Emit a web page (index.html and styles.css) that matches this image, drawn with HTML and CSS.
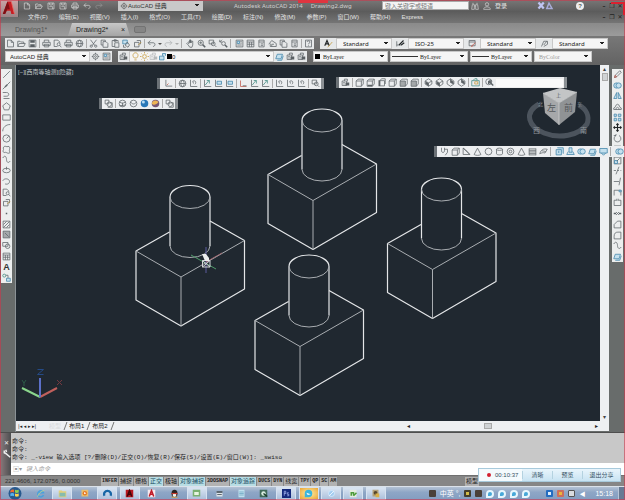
FILE: index.html
```html
<!DOCTYPE html>
<html lang="zh-CN">
<head>
<meta charset="utf-8">
<title>Autodesk AutoCAD 2014 - Drawing2.dwg</title>
<link rel="stylesheet" href="styles.css">
</head>
<body>
<svg class="defs" aria-hidden="true">
  <symbol id="new" viewBox="0 0 12 12"><path d="M2 1.5h5l3 3v6H2zM7 1.5v3h3"/></symbol>
  <symbol id="open" viewBox="0 0 12 12"><path d="M1 10V3h3l1 1h4v2M1 10l2-4h8l-2 4z"/></symbol>
  <symbol id="save" viewBox="0 0 12 12"><path d="M1.5 1.5h9v9h-9z"/><path class="dk" d="M3 1.500h6v3.500H3zM3 7h6v3.500H3z"/></symbol>
  <symbol id="savel" viewBox="0 0 12 12"><path d="M1.500 1.500h9v9h-9zM4 1.500v3h4v-3M3.500 7h5v3.500"/></symbol>
  <symbol id="print" viewBox="0 0 12 12"><path d="M3 4V1.500h6V4M1 4.500h10v4H1zM3 7h6v3.500H3z"/></symbol>
  <symbol id="preview" viewBox="0 0 12 12"><path d="M6 10H1.500V1.500h5L9 4v1"/><circle cx="7.500" cy="7" r="2"/><path d="M9 8.500l2 2.500"/></symbol>
  <symbol id="globe" viewBox="0 0 12 12"><circle cx="6" cy="6" r="4.500"/><path d="M1.500 6h9M6 1.500c-3 3-3 6 0 9M6 1.500c3 3 3 6 0 9"/></symbol>
  <symbol id="cut" viewBox="0 0 12 12"><path d="M2 1l6 8M10 1L4 9"/><circle cx="3" cy="9.500" r="1.500"/><circle cx="9" cy="9.500" r="1.500"/></symbol>
  <symbol id="copy" viewBox="0 0 12 12"><path d="M4 3.500h4l2.500 2.500v5H4zM4 8H1.500V1.500H7v2"/></symbol>
  <symbol id="paste" viewBox="0 0 12 12"><path d="M5 10H1.500V2h8v2M4 1h3v2H4zM5 5h5.500v6H5z"/></symbol>
  <symbol id="match" viewBox="0 0 12 12"><path class="bl" d="M1 1.500h6v5H1z"/><path d="M7 4l3 4-2 3-4-3zM2 8v3h3"/></symbol>
  <symbol id="block" viewBox="0 0 12 12"><path d="M2 4.500h6v6H2zM5 2h5v5"/><path class="gd" d="M7 8l4-4"/></symbol>
  <symbol id="undo" viewBox="0 0 12 12"><path d="M4.500 2L1.500 5l3 3M1.500 5H8c4 0 3 5 0 5"/></symbol>
  <symbol id="redo" viewBox="0 0 12 12"><path d="M7.500 2l3 3-3 3M10.500 5H4C0 5 1 10 4 10"/></symbol>
  <symbol id="pan" viewBox="0 0 12 12"><path d="M3 8L1 6l1-1 2 1V3l1-1v3-4h1v4-3h1v3l1-2h1v5L8 11H5z"/></symbol>
  <symbol id="zoom" viewBox="0 0 12 12"><circle cx="5" cy="5" r="3.500"/><path class="th" d="M7.500 7.500L11 11"/><path d="M3 5h4M5 3v4"/></symbol>
  <symbol id="zoomw" viewBox="0 0 12 12"><path d="M1.500 1.500h6v5h-6z"/><circle cx="7" cy="6.500" r="2.500"/><path d="M9 8.500l2 2"/></symbol>
  <symbol id="zoomp" viewBox="0 0 12 12"><path d="M1 4l3-3M1 4h3M1 4V1"/><circle cx="6" cy="6" r="2.500"/><path class="th" d="M8 8l3 3"/></symbol>
  <symbol id="panel" viewBox="0 0 12 12"><path d="M1.500 1.500h9v9h-9z"/><path class="bl" d="M3 3h3v3H3z"/><path d="M7 3.500h2M7 5.500h2M3 8h6"/></symbol>
  <symbol id="grid" viewBox="0 0 12 12"><path d="M1.500 1.500h9v9h-9zM1.500 4h9M1.500 7h9M4.500 4v6.500M7.500 4v6.500"/></symbol>
  <symbol id="tool" viewBox="0 0 12 12"><path d="M2.500 1.500h7v9h-7zM2.500 4h7M5 6.500h3M5 8.500h3"/></symbol>
  <symbol id="house" viewBox="0 0 12 12"><path d="M1 7l4-5 6 4v4H3V6M5 10V7h3"/></symbol>
  <symbol id="help" viewBox="0 0 12 12"><path d="M2 1.500h8v9H2zM4 4c0-2 4-2 4 0S6 5 6 7M6 8.500v1"/></symbol>
  <symbol id="gear" viewBox="0 0 12 12"><circle cx="6" cy="6" r="3.500"/><circle cx="6" cy="6" r="1.200"/><path d="M6 1v2M6 9v2M1 6h2M9 6h2"/></symbol>
  <symbol id="textst" viewBox="0 0 12 12"><path class="dk2" d="M1 9l3-7 3 7M2 6.500h4"/><path class="gd" d="M5 11l6-7"/></symbol>
  <symbol id="dimst" viewBox="0 0 12 12"><path d="M1 3v7M1 8h7"/><path class="dk2" d="M4 8l6-6M7 8l4-3"/></symbol>
  <symbol id="tabst" viewBox="0 0 12 12"><path d="M1.500 2h8v7h-8zM1.500 4h8"/><path class="rd" d="M5 9l5-4M4 10l3-1"/></symbol>
  <symbol id="leadst" viewBox="0 0 12 12"><path d="M2 10l3-7h5v4l-5 3M5 8l4-5"/></symbol>
  <symbol id="layerb" viewBox="0 0 12 12"><path class="bl" d="M1 9l2-6h7L8 9zM3 11h6l2-6"/></symbol>
  <symbol id="layprop" viewBox="0 0 12 12"><path d="M4.500 4V1.500h4v3M1.500 4h6v6h-6zM3 6h2M3 8h2"/><path class="dk" d="M6 6h5v4H6z"/></symbol>
  <symbol id="bulb" viewBox="0 0 12 12"><path class="gd" d="M4.500 8C1 5 3 1 6 1s5 4 1.500 7zM4.500 10.500h3"/></symbol>
  <symbol id="sun" viewBox="0 0 12 12"><circle class="gd" cx="6" cy="6" r="2.500"/><path class="gd" d="M6 0v2M6 10v2M0 6h2M10 6h2M2 2l1 1M9 9l1 1M10 2L9 3M3 9l-1 1"/></symbol>
  <symbol id="lock" viewBox="0 0 12 12"><path class="bl" d="M2 5.500h6v5H2zM6 5V2h4v3"/></symbol>
  <symbol id="ucs" viewBox="0 0 12 12"><path d="M2.500 1v8.500H11"/><path class="rd" d="M4 8l2-2"/></symbol>
  <symbol id="ucs2" viewBox="0 0 12 12"><path d="M2 1v9h9"/><path class="gr" d="M3 8l5-6M5 2h3.500v4"/></symbol>
  <symbol id="ucs3" viewBox="0 0 12 12"><path d="M2 1v9h9"/><path class="bl" d="M4 3h6v4H4z"/></symbol>
  <symbol id="ucsr" viewBox="0 0 12 12"><path class="rd" d="M2 2v8h8"/><path d="M5 9h5"/></symbol>
  <symbol id="ucsx" viewBox="0 0 12 12"><path d="M2 1v9h9M5 3c4-2 5 2 3 4M5 3l1 3"/></symbol>
  <symbol id="cubea" viewBox="0 0 12 12"><path d="M1.500 4h7v7h-7zM1.500 4L4 1.500h7L8.500 4M11 1.500V8L8.500 11"/></symbol>
  <symbol id="cubeb" viewBox="0 0 12 12"><path d="M1.500 4h7v7h-7zM1.500 4L4 1.500h7V8L8.500 11M8.500 4L11 1.500"/><path class="dk" d="M2 9h6v2H2z"/></symbol>
  <symbol id="cubec" viewBox="0 0 12 12"><path class="dk" d="M2 3h2v8H2z"/><path d="M4 3.500h6v7H4zM4 3.500L6 1h5v7"/></symbol>
  <symbol id="cubed" viewBox="0 0 12 12"><path class="dk3" d="M1.500 4h7v7h-7z"/><path d="M1.500 4L4 1.500h7V8L8.500 11"/></symbol>
  <symbol id="iso" viewBox="0 0 12 12"><path d="M6 1l4.500 3v4L6 11 1.500 8V4zM1.500 4L6 6.500 10.500 4M6 6.500V11"/><path class="dk" d="M2 4.500l4 2v4L2 8z"/></symbol>
  <symbol id="isor" viewBox="0 0 12 12"><path d="M6 1l4.500 3v4L6 11 1.500 8V4zM6 1v5l4.500 2"/><path class="dk" d="M6 2l4 3v3L6 6z"/></symbol>
  <symbol id="camera" viewBox="0 0 12 12"><path class="gr" d="M1 3.500h10v7H1zM3 3l2-2h3v2"/><path class="gd" d="M5 5h4v3H5z"/></symbol>
  <symbol id="orbit" viewBox="0 0 12 12"><circle cx="5" cy="5" r="4"/><path class="th" d="M5 4l6 6M5 4v4M5 4h4"/></symbol>
  <symbol id="cubes" viewBox="0 0 12 12"><path d="M1.500 1.500h5v5h-5z"/><circle cx="7" cy="7" r="3"/><path d="M8 5h3v6H5"/></symbol>
  <symbol id="wire" viewBox="0 0 12 12"><circle cx="6" cy="6" r="4.500"/><path d="M2 4c3 2 5 2 8 0M6 5v5M2 9l8-1"/></symbol>
  <symbol id="hid" viewBox="0 0 12 12"><circle cx="6" cy="6" r="4.500"/><path d="M2 4c3 4 6 3 8 0"/></symbol>
  <symbol id="ballb" viewBox="0 0 12 12"><circle cx="6" cy="6" r="5" fill="#2878b8" stroke="none"/><circle cx="4.500" cy="4" r="2" fill="#b8dcf4" stroke="none"/></symbol>
  <symbol id="ballo" viewBox="0 0 12 12"><circle cx="6" cy="6" r="5" fill="#765775" stroke="none"/><path d="M1 6c2 3 6 2 9-2a5 5 0 0 0-9 2" fill="#eeb554" stroke="none"/></symbol>
  <symbol id="line" viewBox="0 0 12 12"><path d="M1.500 10.500l9-9"/></symbol>
  <symbol id="xline" viewBox="0 0 12 12"><path d="M1 11L11 1"/><path class="th" d="M4 8l3-3"/></symbol>
  <symbol id="pline" viewBox="0 0 12 12"><path d="M1 2h5c4 0 4 5 0 5H2M2 10h8"/></symbol>
  <symbol id="poly" viewBox="0 0 12 12"><path d="M6 1l5 4-2 5.500H3L1 5z"/></symbol>
  <symbol id="rect" viewBox="0 0 12 12"><path d="M1 2.500h10v7H1z"/></symbol>
  <symbol id="arc" viewBox="0 0 12 12"><path d="M1 11c0-5 4-9 10-9"/></symbol>
  <symbol id="circle" viewBox="0 0 12 12"><circle cx="6" cy="6" r="4.800"/><path d="M6 6l3-3"/></symbol>
  <symbol id="cloud" viewBox="0 0 12 12"><path d="M3 10C0 9 2 7 2 6S1 3 3 2s3 1 5 0 3 2 2 4 2 5-1 5-3-2-6-1z"/></symbol>
  <symbol id="spline" viewBox="0 0 12 12"><path d="M1 4c3-5 5-1 5 2s2 6 5 2"/></symbol>
  <symbol id="ell" viewBox="0 0 12 12"><ellipse cx="6" cy="6" rx="5" ry="3"/><path d="M6 1v4"/></symbol>
  <symbol id="ellarc" viewBox="0 0 12 12"><path d="M1 5c2-4 9-3 9 1s-5 4-6 3"/></symbol>
  <symbol id="dot" viewBox="0 0 12 12"><path class="dk" d="M5 5h2v2H5z"/></symbol>
  <symbol id="hatch" viewBox="0 0 12 12"><path d="M1.500 1.500h9v9h-9zM2 6l4-4M2 10l8-8M6 10l4-4"/></symbol>
  <symbol id="gradient" viewBox="0 0 12 12"><path class="dk3" d="M1.500 1.500h9v9h-9z"/><path d="M4 4l5 5"/></symbol>
  <symbol id="region" viewBox="0 0 12 12"><path d="M1 2h7v5H1z"/><circle cx="7.500" cy="7" r="3"/></symbol>
  <symbol id="add" viewBox="0 0 12 12"><circle class="gr" cx="3" cy="3.500" r="2"/><path d="M5 3h3v4"/><path class="bl" d="M6 7h5v4H6z"/></symbol>
  <symbol id="tri" viewBox="0 0 12 12"><path d="M1.500 10L6 1.500 10.500 10c-2 1.500-7 1.500-9 0z"/></symbol>
  <symbol id="wedge" viewBox="0 0 12 12"><path d="M1.500 1.500V10h9zM1.500 1.500l3 2 6 6.500"/></symbol>
  <symbol id="cyl" viewBox="0 0 12 12"><ellipse cx="6" cy="3" rx="4" ry="1.500"/><path d="M2 3v6c0 2 8 2 8 0V3"/></symbol>
  <symbol id="ball" viewBox="0 0 12 12"><circle cx="6" cy="6" r="4.500"/></symbol>
  <symbol id="torus" viewBox="0 0 12 12"><circle cx="6" cy="6" r="4.500"/><circle cx="6" cy="6" r="1.800"/></symbol>
  <symbol id="helix" viewBox="0 0 12 12"><path d="M1.500 2.500h9M1.500 4.500h9M1.500 6.500h9M1.500 8.500h9M1.500 10.500h9M1.500 2v9M10.500 2v9"/></symbol>
  <symbol id="psolid" viewBox="0 0 12 12"><path d="M2 1v4c0 3 4 3 4 0V1M6 3h4v4L7 11"/></symbol>
  <symbol id="surf" viewBox="0 0 12 12"><path d="M1 9c2-6 5-7 10-6L8 8c-3-1-5 0-7 1zM4 5l5 1"/></symbol>
  <symbol id="bbox" viewBox="0 0 12 12"><path class="bl" d="M1.500 3.500h7v7h-7zM3 1h8v8M5 8V5"/></symbol>
  <symbol id="btool" viewBox="0 0 12 12"><path class="bl" d="M4 1h4v6H4zM1 10h10L9 6M3 6l-2 4"/></symbol>
  <symbol id="bring" viewBox="0 0 12 12"><circle class="bl" cx="4.500" cy="6" r="3.500"/><circle class="bl" cx="7.500" cy="6" r="3.500"/></symbol>
  <symbol id="bscr" viewBox="0 0 12 12"><path class="bl" d="M1 2h10v6H1zM3 8l3 3 3-3"/></symbol>
  <symbol id="erase" viewBox="0 0 12 12"><path d="M2 10l1-3 6-6 2 2-6 6z"/><path class="rd" d="M2 10l1-3 2 2z"/></symbol>
  <symbol id="mirror" viewBox="0 0 12 12"><path class="bl" d="M5 2v8H1zM7 2v8h4z"/></symbol>
  <symbol id="offset" viewBox="0 0 12 12"><path d="M1 10h10V8c-3 0-2-5-5-5S4 8 1 8zM4 10c0-4 4-4 4 0"/></symbol>
  <symbol id="array" viewBox="0 0 12 12"><path class="bl" d="M1.500 1.500h3v3h-3zM7 1.500h3.500v3H7zM1.500 7h3v3.500h-3zM7 7h3.500v3.500H7z"/></symbol>
  <symbol id="move" viewBox="0 0 12 12"><path class="dk2" d="M6 1v10M1 6h10M4.500 2.500L6 1l1.500 1.500M4.500 9.500L6 11l1.500-1.500M2.500 4.500L1 6l1.500 1.500M9.500 4.500L11 6 9.500 7.500"/></symbol>
  <symbol id="rotate" viewBox="0 0 12 12"><path d="M4 2a4.500 4.500 0 1 0 4 0M4 2V0M4 2H1"/></symbol>
  <symbol id="scale" viewBox="0 0 12 12"><path d="M1.500 1.500h9v9h-9z"/><path class="bl" d="M2 6h4v4H2z"/><path d="M5 7l4-4"/></symbol>
  <symbol id="trim" viewBox="0 0 12 12"><path d="M1 6h3M6 6h2M10 6h1M8 1L4 11"/></symbol>
  <symbol id="extend" viewBox="0 0 12 12"><path d="M1 6h7M10 1L8 11"/></symbol>
  <symbol id="break1" viewBox="0 0 12 12"><path d="M1.500 10V3h9v7"/><path class="bl" d="M8 3h3v2H8z"/></symbol>
  <symbol id="break2" viewBox="0 0 12 12"><path d="M4 3H1.500v7h9V3H8M5 1v3M7 1v3"/></symbol>
  <symbol id="join" viewBox="0 0 12 12"><path class="th" d="M1 6h3M8 6h3"/><path d="M4 4l2 2-2 2M8 4L6 6l2 2"/></symbol>
  <symbol id="chamfer" viewBox="0 0 12 12"><path d="M1.500 10.500V6L6 1.500h4.500v9z"/></symbol>
  <symbol id="fillet" viewBox="0 0 12 12"><path d="M1.500 10.500V7c0-4 2-5.500 5-5.500h4v9z"/></symbol>
  <symbol id="find" viewBox="0 0 12 12"><path d="M2 4h3v7H1zM7 4h3l1 7H7zM2 2h2M8 2h2M5 6h2"/></symbol>
  <symbol id="user" viewBox="0 0 12 12"><circle cx="6" cy="3.500" r="2.500"/><path d="M1 11c0-5 10-5 10 0z"/></symbol>
  <symbol id="wrench" viewBox="0 0 12 12"><path class="th" d="M3 2v3l2 1 6 5M5 1l1 3"/></symbol>

  <symbol id="solid" viewBox="0 0 112 144" overflow="visible">
    <g class="edge">
      <path d="M34 46.500L.5 65.500V114.500L45.500 140.500 109 103.500V55L74.500 35.500"/>
      <path class="faint" d="M.5 65.500L45.500 91.500 109 55M45.500 91.500v49"/>
      <path d="M34.500 11.500V60.500M74.500 11.500V60.500M34.500 11.500a20 11.500 0 0 1 40 0"/>
      <path class="faint" d="M34.500 11.500a20 11.500 0 0 0 40 0M34.500 60.500a20 11.500 0 0 0 40 0"/>
    </g>
  </symbol>
</svg>

<header class="head">
  <button class="app" aria-label="应用程序菜单"><svg viewBox="0 0 20 22"><path d="M2 18L8 2h5l4 16h-4l-1-4H7l-2 4z" fill="#c51d23"/><path d="M8 2L2 18h3l5-11zM10 7l-2 5h3z" fill="#7d1014"/><path d="M13 2l4 16" stroke="#f06a62" fill="none"/></svg></button>
  <div class="headrows">
    <div class="titlebar">
      <div class="quick">
        <button aria-label="新建"><svg class="ic"><use href="#new"/></svg></button>
        <button aria-label="打开"><svg class="ic"><use href="#open"/></svg></button>
        <button aria-label="保存"><svg class="ic"><use href="#savel"/></svg></button>
        <button aria-label="另存为"><svg class="ic"><use href="#savel"/></svg></button>
        <button aria-label="打印"><svg class="ic"><use href="#print"/></svg></button>
        <button aria-label="放弃"><svg class="ic"><use href="#undo"/></svg></button>
        <button class="dim" aria-label="重做"><svg class="ic"><use href="#redo"/></svg></button>
      </div>
      <div class="pick wsp"><svg class="ic"><use href="#gear"/></svg><select aria-label="工作空间"><option>AutoCAD 经典</option></select></div>
      <p class="apptitle"><span>Autodesk AutoCAD 2014</span><span>Drawing2.dwg</span></p>
      <input class="search" type="search" aria-label="搜索" placeholder="键入关键字或短语">
      <div class="acct">
        <button aria-label="查找"><svg class="ic"><use href="#find"/></svg></button>
        <button aria-label="用户"><svg class="ic"><use href="#user"/></svg></button>
        <button class="login">登录</button>
      </div>
      <button class="exch" aria-label="Exchange"><svg viewBox="0 0 24 12"><path d="M2 2l7 8M9 2L2 10" stroke="#bfc4f2" stroke-width="3"/><path d="M13 10l3-7 4 7z" fill="none" stroke="#a8acd8" stroke-width="2"/></svg></button>
      <button class="round" aria-label="帮助">?</button>
      <div class="wbtns"><button aria-label="最小化">–</button><button aria-label="还原">❐</button><button aria-label="关闭">✕</button></div>
    </div>
    <div class="menubar">
      <nav>
        <a href="#">文件(F)</a><a href="#">编辑(E)</a><a href="#">视图(V)</a><a href="#">插入(I)</a><a href="#">格式(O)</a><a href="#">工具(T)</a><a href="#">绘图(D)</a><a href="#">标注(N)</a><a href="#">修改(M)</a><a href="#">参数(P)</a><a href="#">窗口(W)</a><a href="#">帮助(H)</a><a href="#">Express</a>
      </nav>
      <div class="wbtns"><button aria-label="最小化图形">–</button><button aria-label="还原图形">❐</button><button aria-label="关闭图形">✕</button></div>
    </div>
  </div>
</header>

<div class="tabs">
  <button class="tab">Drawing1*</button>
  <button class="tab on">Drawing2* <span>×</span></button>
  <button class="plus" aria-label="新图形"></button>
</div>

<div class="bars">
  <div class="row">
    <div class="bar">
      <button aria-label="新建"><svg class="ic"><use href="#new"/></svg></button><button aria-label="打开"><svg class="ic"><use href="#open"/></svg></button><button aria-label="保存"><svg class="ic"><use href="#save"/></svg></button><i></i>
      <button aria-label="打印"><svg class="ic"><use href="#print"/></svg></button><button aria-label="打印预览"><svg class="ic"><use href="#preview"/></svg></button><button aria-label="发布"><svg class="ic"><use href="#print"/></svg></button><button aria-label="三维打印"><svg class="ic"><use href="#globe"/></svg></button><i></i>
      <button aria-label="剪切"><svg class="ic"><use href="#cut"/></svg></button><button aria-label="复制"><svg class="ic"><use href="#copy"/></svg></button><button aria-label="粘贴"><svg class="ic"><use href="#paste"/></svg></button><button aria-label="特性匹配"><svg class="ic"><use href="#match"/></svg></button><button aria-label="块编辑器"><svg class="ic"><use href="#block"/></svg></button><i></i>
      <button class="wide" aria-label="放弃"><svg class="ic"><use href="#undo"/></svg><b></b></button><button class="wide dim" aria-label="重做"><svg class="ic"><use href="#redo"/></svg><b></b></button><i class="w"></i>
      <button aria-label="平移"><svg class="ic"><use href="#pan"/></svg></button><button aria-label="缩放"><svg class="ic"><use href="#zoom"/></svg></button><button aria-label="窗口缩放"><svg class="ic"><use href="#zoomw"/></svg></button><button aria-label="缩放上一个"><svg class="ic"><use href="#zoomp"/></svg></button><i class="w"></i>
      <button aria-label="特性"><svg class="ic"><use href="#panel"/></svg></button><button aria-label="设计中心"><svg class="ic"><use href="#grid"/></svg></button><button aria-label="工具选项板"><svg class="ic"><use href="#tool"/></svg></button><button aria-label="图纸集"><svg class="ic"><use href="#house"/></svg></button><button aria-label="标记集"><svg class="ic"><use href="#copy"/></svg></button><button aria-label="计算器"><svg class="ic"><use href="#tool"/></svg></button><i></i>
      <button aria-label="帮助"><svg class="ic"><use href="#help"/></svg></button>
    </div>
    <div class="bar stylesbar">
      <button aria-label="文字样式"><svg class="ic"><use href="#textst"/></svg></button><select aria-label="文字样式"><option>Standard</option></select>
      <button aria-label="标注样式"><svg class="ic"><use href="#dimst"/></svg></button><select aria-label="标注样式"><option>ISO-25</option></select>
      <button aria-label="表格样式"><svg class="ic"><use href="#tabst"/></svg></button><select aria-label="表格样式"><option>Standard</option></select>
      <button aria-label="引线样式"><svg class="ic"><use href="#leadst"/></svg></button><select aria-label="引线样式"><option>Standard</option></select>
    </div>
  </div>
  <div class="row">
    <div class="bar">
      <select class="space" aria-label="工作空间"><option>AutoCAD 经典</option></select>
      <button aria-label="工作空间设置"><svg class="ic"><use href="#gear"/></svg></button><button aria-label="我的工作空间"><svg class="ic"><use href="#panel"/></svg></button>
    </div>
    <div class="bar">
      <button aria-label="图层特性"><svg class="ic"><use href="#layprop"/></svg></button>
      <div class="pick layer"><span class="lead"><svg class="ic"><use href="#bulb"/></svg><svg class="ic"><use href="#sun"/></svg><svg class="ic dim"><use href="#layprop"/></svg><svg class="ic"><use href="#lock"/></svg><em></em></span><select aria-label="图层"><option>0</option></select></div>
      <button aria-label="置为当前"><svg class="ic"><use href="#layerb"/></svg></button><button aria-label="上一个图层"><svg class="ic"><use href="#layprop"/></svg></button><button aria-label="图层状态"><svg class="ic"><use href="#layprop"/></svg></button>
    </div>
    <div class="bar props">
      <div class="pick colr"><span class="lead"><em></em></span><select aria-label="颜色"><option>ByLayer</option></select></div>
      <div class="pick ltype"><span class="lead"><u></u></span><select aria-label="线型"><option>ByLayer</option></select></div>
      <div class="pick lwt"><span class="lead"><u></u></span><select aria-label="线宽"><option>ByLayer</option></select></div>
      <select class="plot" aria-label="打印样式" disabled><option>ByColor</option></select>
    </div>
  </div>
</div>

<main class="work">
  <div class="vbar draw">
    <button aria-label="直线"><svg class="ic"><use href="#line"/></svg></button><button aria-label="构造线"><svg class="ic"><use href="#xline"/></svg></button><button aria-label="多段线"><svg class="ic"><use href="#pline"/></svg></button><button aria-label="多边形"><svg class="ic"><use href="#poly"/></svg></button><button aria-label="矩形"><svg class="ic"><use href="#rect"/></svg></button><button aria-label="圆弧"><svg class="ic"><use href="#arc"/></svg></button><button aria-label="圆"><svg class="ic"><use href="#circle"/></svg></button><button aria-label="修订云线"><svg class="ic"><use href="#cloud"/></svg></button><button aria-label="样条曲线"><svg class="ic"><use href="#spline"/></svg></button><button aria-label="椭圆"><svg class="ic"><use href="#ell"/></svg></button><button aria-label="椭圆弧"><svg class="ic"><use href="#ellarc"/></svg></button><button aria-label="插入块"><svg class="ic"><use href="#preview"/></svg></button><button aria-label="创建块"><svg class="ic"><use href="#block"/></svg></button><button aria-label="点"><svg class="ic"><use href="#dot"/></svg></button><button aria-label="图案填充"><svg class="ic"><use href="#hatch"/></svg></button><button aria-label="渐变色"><svg class="ic"><use href="#gradient"/></svg></button><button aria-label="面域"><svg class="ic"><use href="#region"/></svg></button><button aria-label="表格"><svg class="ic"><use href="#grid"/></svg></button><button class="mtext">A</button><button aria-label="添加选定对象"><svg class="ic"><use href="#add"/></svg></button>
  </div>

  <section class="doc">
    <div class="canvas">
      <svg class="model" viewBox="15 65 585 356" width="585" height="356" role="img" aria-label="模型空间">
        <use href="#solid" x="135.500" y="185.500" width="112" height="144"/>
        <use href="#solid" x="267.500" y="109" width="112" height="144"/>
        <use href="#solid" x="387" y="178" width="112" height="144"/>
        <use href="#solid" x="254.500" y="255" width="112" height="144"/>
        <g fill="none">
          <path d="M191 255l25 14" stroke="#4f9a6a"/><path d="M206 247v26" stroke="#5a5b9c"/><path d="M206 262l16-9" stroke="#a06a72"/>
          <path d="M202.500 260.500h7.500v6.500h-7.500zM202.500 260.500l7.500 6.500M210 260.500l-7.500 6.500" stroke="#d5d8da"/>
        </g>
        <path d="M202 254h4l3 4v3h-4z" fill="#eceeee"/>
        <g fill="none" stroke-width="2">
          <path d="M40 397L22 388" stroke="#8ad58c"/><path d="M40 397l17-9" stroke="#c0605c"/><path d="M40 397v-19" stroke="#5c70c8"/>
          <path d="M37.500 369.500h6l-6 5h6" stroke="#244a86" stroke-width="1"/><path d="M22 380l2 3 2-3M24 383v3" stroke="#2c5c48" stroke-width="1"/><path d="M57 380l5 5M62 380l-5 5" stroke="#733940" stroke-width="1"/>
        </g>
        <g>
          <path d="M539 104C523 113 529 127 544 133S579 136 587 124c3-8-1-15-8-19" fill="none" stroke="#4c545d" stroke-width="5"/>
          <path d="M543 93l17-5 17 4-18 11z" fill="#c3c5c6"/><path d="M543 93l16 10v22l-14-12z" fill="#a6a8aa"/><path d="M577 92l-18 11v22l16-13z" fill="#909395"/>
          <path d="M543 93l16 10 18-11M559 103v22" fill="none" stroke="#d4d5d6" stroke-width=".7"/>
          <g class="cubetext"><text x="547" y="111">左</text><text x="564" y="111">前</text><text x="556" y="97" class="s">上</text><text x="533" y="133" class="c">西</text><text x="580" y="133" class="c">南</text><text x="538" y="106" class="c s">北</text><text x="577" y="106" class="c s">东</text></g>
        </g>
      </svg>
      <p class="viewlabel">[−][西南等轴测][隐藏]</p>
      <div class="float f-ucs">
        <button aria-label="UCS"><svg class="ic"><use href="#ucs"/></svg></button><i></i><button aria-label="世界"><svg class="ic"><use href="#globe"/></svg></button><button aria-label="上一个UCS"><svg class="ic"><use href="#ucsx"/></svg></button><i></i><button aria-label="面UCS"><svg class="ic"><use href="#ucs2"/></svg></button><button aria-label="对象"><svg class="ic"><use href="#ucs3"/></svg></button><button aria-label="视图"><svg class="ic"><use href="#ucs3"/></svg></button><i></i><button aria-label="原点"><svg class="ic"><use href="#ucsr"/></svg></button><button aria-label="Z轴矢量"><svg class="ic"><use href="#ucs2"/></svg></button><button aria-label="三点"><svg class="ic"><use href="#ucs2"/></svg></button><i></i><button aria-label="X"><svg class="ic"><use href="#ucsx"/></svg></button><button aria-label="Y"><svg class="ic"><use href="#ucsx"/></svg></button><button aria-label="Z"><svg class="ic"><use href="#ucsx"/></svg></button><i></i><button aria-label="应用"><svg class="ic"><use href="#zoomw"/></svg></button>
      </div>
      <div class="float f-view">
        <button aria-label="命名视图"><svg class="ic"><use href="#layprop"/></svg></button><i></i><button aria-label="俯视"><svg class="ic"><use href="#cubea"/></svg></button><button aria-label="仰视"><svg class="ic"><use href="#cubeb"/></svg></button><button aria-label="左视"><svg class="ic"><use href="#cubec"/></svg></button><button aria-label="右视"><svg class="ic"><use href="#cubea"/></svg></button><button aria-label="前视"><svg class="ic"><use href="#cubed"/></svg></button><button aria-label="后视"><svg class="ic"><use href="#cubed"/></svg></button><i></i><button aria-label="西南等轴测"><svg class="ic"><use href="#iso"/></svg></button><button aria-label="东南等轴测"><svg class="ic"><use href="#iso"/></svg></button><button aria-label="东北等轴测"><svg class="ic"><use href="#isor"/></svg></button><button aria-label="西北等轴测"><svg class="ic"><use href="#isor"/></svg></button><i></i><button aria-label="相机"><svg class="ic"><use href="#camera"/></svg></button><i></i><button aria-label="上一个视图"><svg class="ic"><use href="#orbit"/></svg></button><select aria-label="视图"><option></option></select>
      </div>
      <div class="float f-style">
        <button aria-label="二维线框"><svg class="ic"><use href="#cubes"/></svg></button><i></i><button aria-label="线框"><svg class="ic"><use href="#wire"/></svg></button><button aria-label="隐藏"><svg class="ic"><use href="#hid"/></svg></button><button aria-label="真实"><svg class="ic"><use href="#ballb"/></svg></button><button aria-label="概念"><svg class="ic"><use href="#ballo"/></svg></button><i></i><button aria-label="管理视觉样式"><svg class="ic"><use href="#cubes"/></svg></button>
      </div>
    </div>
    <div class="vscroll"><button aria-label="向上">▴</button><span></span><button aria-label="向下">▾</button></div>
    <div class="layouts">
      <span class="nav">|◂ ◂ ▸ ▸|</span><a href="#" class="mod">模型</a><a href="#">布局1</a><a href="#">布局2</a>
      <div class="hscroll"><button aria-label="向左">◂</button><span></span><button aria-label="向右">▸</button></div>
    </div>
  </section>

  <div class="vbar modify">
    <button aria-label="删除"><svg class="ic"><use href="#erase"/></svg></button><button aria-label="复制"><svg class="ic"><use href="#bring"/></svg></button><button aria-label="镜像"><svg class="ic"><use href="#mirror"/></svg></button><button aria-label="偏移"><svg class="ic"><use href="#offset"/></svg></button><button aria-label="阵列"><svg class="ic"><use href="#array"/></svg></button><button aria-label="移动"><svg class="ic"><use href="#move"/></svg></button><button aria-label="旋转"><svg class="ic"><use href="#rotate"/></svg></button><button aria-label="缩放"><svg class="ic"><use href="#scale"/></svg></button><button aria-label="拉伸"><svg class="ic"><use href="#scale"/></svg></button><button aria-label="修剪"><svg class="ic"><use href="#trim"/></svg></button><button aria-label="延伸"><svg class="ic"><use href="#extend"/></svg></button><button aria-label="打断于点"><svg class="ic"><use href="#break1"/></svg></button><button aria-label="打断"><svg class="ic"><use href="#break2"/></svg></button><button aria-label="合并"><svg class="ic"><use href="#join"/></svg></button><button aria-label="倒角"><svg class="ic"><use href="#chamfer"/></svg></button><button aria-label="圆角"><svg class="ic"><use href="#fillet"/></svg></button><button aria-label="光顺曲线"><svg class="ic"><use href="#spline"/></svg></button><button aria-label="分解"><svg class="ic"><use href="#layerb"/></svg></button>
  </div>

  <div class="float f-solid">
    <button aria-label="多段体"><svg class="ic"><use href="#psolid"/></svg></button><button aria-label="长方体"><svg class="ic"><use href="#cubea"/></svg></button><button aria-label="楔体"><svg class="ic"><use href="#wedge"/></svg></button><button aria-label="圆锥体"><svg class="ic"><use href="#tri"/></svg></button><button aria-label="球体"><svg class="ic"><use href="#ball"/></svg></button><button aria-label="圆柱体"><svg class="ic"><use href="#cyl"/></svg></button><button aria-label="圆环体"><svg class="ic"><use href="#torus"/></svg></button><button aria-label="棱锥体"><svg class="ic"><use href="#tri"/></svg></button><button aria-label="螺旋"><svg class="ic"><use href="#helix"/></svg></button><button aria-label="平面曲面"><svg class="ic"><use href="#surf"/></svg></button><i></i><button aria-label="拉伸"><svg class="ic"><use href="#bbox"/></svg></button><button aria-label="按住并拖动"><svg class="ic"><use href="#btool"/></svg></button><button aria-label="扫掠"><svg class="ic"><use href="#bring"/></svg></button><button aria-label="旋转"><svg class="ic"><use href="#layerb"/></svg></button><button aria-label="放样"><svg class="ic"><use href="#bscr"/></svg></button><i></i><button aria-label="并集"><svg class="ic"><use href="#bring"/></svg></button>
  </div>
</main>

<section class="cmd">
  <div class="grip"><button aria-label="关闭命令行">✕</button><button aria-label="自定义"><svg class="ic"><use href="#wrench"/></svg></button></div>
  <div class="cmdbody">
    <div class="log"><p>命令:</p><p>命令:</p><p>命令: _-view 输入选项 [?/删除(D)/正交(O)/恢复(R)/保存(S)/设置(E)/窗口(W)]: _swiso</p></div>
    <label class="prompt"><span>▣▾</span><input aria-label="命令" placeholder="键入命令"></label>
  </div>
</section>

<div class="status">
  <output>221.4606, 172.0756, 0.0000</output>
  <div class="modes"><button>INFER</button><button class="zh">捕捉</button><button class="zh">栅格</button><button class="zh on">正交</button><button class="zh">极轴</button><button class="zh on">对象捕捉</button><button>3DOSNAP</button><button class="zh on">对象追踪</button><button>DUCS</button><button>DYN</button><button class="zh">线宽</button><button>TPY</button><button>QP</button><button>SC</button><button>AM</button></div>
  <button class="modelbtn">模型</button>
</div>

<footer class="task">
  <button class="orb" aria-label="开始"><svg viewBox="0 0 16 14"><circle cx="8" cy="7" r="7" fill="#27598e"/><path d="M3 4q2-2 4-1v3q-2-1-4 0z" fill="#f06a30"/><path d="M8 3q2 1 4 0v3q-2 1-4 0z" fill="#8fd050"/><path d="M3 7q2-1 4 0v3q-2-1-4 0z" fill="#58b4f0"/><path d="M8 7q2 1 4 0v3q-2 1-4 0z" fill="#ffd24a"/></svg></button>
  <div class="apps">
    <button aria-label="Internet Explorer"><svg viewBox="0 0 12 12"><path d="M10 8a4 4 0 1 1 0-3H4" fill="none" stroke="#4aa0dc" stroke-width="2"/><path d="M2 10Q5 3 11 2" fill="none" stroke="#c8dc80"/></svg></button>
    <button class="run" aria-label="资源管理器"><svg viewBox="0 0 12 12"><path d="M1 2h4l1 1h5v8H1z" fill="#e3cf7a"/><path d="M2 5h8v5H2z" fill="#86bcae"/></svg></button>
    <button aria-label="播放器"><svg viewBox="0 0 12 12"><rect x="2" y="1" width="9" height="9" fill="#e8c070"/><circle cx="6.500" cy="5.500" r="3" fill="#e57922"/><path d="M5.500 4v3l3-1.500z" fill="#fff"/></svg></button>
    <button class="run" aria-label="浏览器"><svg viewBox="0 0 12 12"><path d="M2 9a4.500 4.500 0 1 1 8 0" fill="none" stroke="#1765a5" stroke-width="3"/></svg></button>
    <button class="run" aria-label="AutoCAD"><svg viewBox="0 0 12 12"><path fill="#b71820" d="M1 1h10v10H1z"/><path d="M3 10l3-8 3 8M4 7h4" stroke="#40070a" stroke-width="2" fill="none"/></svg></button>
    <button aria-label="AutoCAD 2014"><svg viewBox="0 0 12 12"><path fill="#f6e8ec" d="M1 1h10v10H1z"/><path d="M3 10l3-8 3 8M4 7h4" stroke="#c01c28" stroke-width="2" fill="none"/></svg></button>
    <button aria-label="QQ"><svg viewBox="0 0 12 12"><ellipse cx="6" cy="6" rx="4" ry="5" fill="#2b2522"/><ellipse cx="6" cy="8" rx="2.500" ry="2.500" fill="#eee"/><path d="M2 6h8" stroke="#c8382a" stroke-width="1.500"/><path d="M2 11h8" stroke="#e8a028"/></svg></button>
    <button class="run" aria-label="文档"><svg viewBox="0 0 12 12"><rect x="1" y="1" width="10" height="9" fill="#7ab070"/><path d="M3 4h6v4H3z" fill="#e8f4e0"/></svg></button>
    <button aria-label="计算器"><svg viewBox="0 0 12 12"><path d="M2 3h8v7H2z" fill="#dfe4e8"/><path d="M2 3h8v2H2zM3 7h6v1H3z" fill="#34414c"/></svg></button>
    <button aria-label="记事本"><svg viewBox="0 0 12 12"><rect x="2" y="1" width="8" height="10" fill="#bfe0ee"/><path d="M3 4h6M3 6h6M3 8h6" stroke="#68a4c0"/></svg></button>
    <button aria-label="录屏"><svg viewBox="0 0 12 12"><rect x="1" y="1" width="10" height="10" fill="#3f6a58"/><circle cx="6" cy="6" r="3" fill="#d8ece0"/><path d="M6 6l5 4" stroke="#1b3c2c" stroke-width="2"/></svg></button>
    <button class="run" aria-label="Photoshop"><svg viewBox="0 0 12 12"><rect width="12" height="12" fill="#142a7c"/><path d="M3 9V3h2v3H3M9 5H7v2h2v2H7" stroke="#a8b8f4" fill="none"/></svg></button>
    <button class="run hot" aria-label="直播"><svg viewBox="0 0 12 12"><path d="M1 6a5 5 0 1 1 10 0 5 5 0 0 1-5 5H1z" fill="#39b5dc"/><path d="M3 5l6 2-4 1z" fill="#fff"/></svg></button>
    <button class="run" aria-label="云盘"><svg viewBox="0 0 12 12"><circle cx="6" cy="6" r="4" fill="#a4cdf0" stroke="#d8ecfc"/><path d="M3 9l6-6" stroke="#fff"/></svg></button>
    <button class="run" aria-label="编辑器"><svg viewBox="0 0 12 12"><path fill="#e6eee0" d="M1 1h9v10H1z"/><path d="M3 9V5h3v4M6 9l4-4" stroke="#4f9c3c" stroke-width="2" fill="none"/></svg></button>
    <button class="run" aria-label="工具箱"><svg viewBox="0 0 12 12"><path fill="#b3a078" d="M2 1h8v9H2z"/><circle cx="6" cy="5" r="2.500" fill="#55462c"/><path d="M6 6h5v5H6z" fill="#d8b048"/></svg></button>
  </div>
  <div class="tray">
    <span class="sw a"></span><span class="ime">中英 °,</span><span class="sw b"></span><span class="sw k"></span>
    <span class="ball"></span><span class="ball"></span><span class="ball"></span><span class="ball"></span>
    <span class="sw c"></span><span class="sw d"></span><span class="sw e"></span><span class="spk">◀</span><time>15:18</time>
  </div>
  <button class="desk" aria-label="显示桌面"></button>
</footer>

<aside class="share">
  <p><span class="rec"></span>00:10:37</p><button>清晰</button><button>预览</button><button>退出分享</button>
</aside>
<div class="frame"></div>
</body>
</html>
```
FILE: styles.css
```css
* { box-sizing: border-box; }
body {
  margin: 0;
  height: 100vh;
  display: flex;
  flex-direction: column;
  position: relative;
  overflow: hidden;
  background: #686968;
  font: 6px/8px "Liberation Sans", "Noto Sans CJK SC", sans-serif;
  color: #222;
}
p { margin: 0; }
a { color: inherit; text-decoration: none; }
button, select, input { font: inherit; color: inherit; border: 0; padding: 0; margin: 0; background: none; border-radius: 0; }
button { display: flex; align-items: center; justify-content: center; flex: none; }
.defs { position: absolute; width: 0; height: 0; }
.ic { width: 9px; height: 9px; flex: none; fill: none; stroke: #5d6468; stroke-width: 1; }
.dk { fill: #5a6064; stroke: none; }
.dk2 { stroke: #202426; stroke-width: 1.5; }
.dk3 { fill: #a4a8aa; }
.bl { stroke: #3f83a8; fill: #c4e0ee; }
.gd { stroke: #c39a3c; }
.rd { stroke: #c0584c; }
.gr { stroke: #3f8a80; }
.th { stroke-width: 2; }
.dim { opacity: .4; }

/* title and menus */
.head { display: flex; height: 23px; flex: none; background: linear-gradient(#787676, #5c5c5c 50%, #757575); color: #e4e4e4; }
.app { width: 19px; height: 17px; background: linear-gradient(#c9a3a5, #9b8587); border-right: 1px solid #555; }
.app svg { width: 16px; height: 17px; }
.headrows { flex: 1; min-width: 0; }
.titlebar { display: flex; align-items: center; height: 11px; }
.titlebar .ic { stroke: #dadada; width: 8px; height: 8px; }
.quick { display: flex; gap: 4px; padding-left: 4px; width: 99px; }
.pick { position: relative; display: flex; align-items: center; }
.pick > .ic, .lead { position: absolute; left: 2px; pointer-events: none; display: flex; align-items: center; }
.wsp { width: 85px; }
.wsp select { width: 100%; height: 10px; padding-left: 9px; color: #333; background-color: #c9c9c9; }
.titlebar .wsp .ic { stroke: #555; }
.apptitle { flex: 1; display: flex; gap: 8px; padding-left: 31px; white-space: nowrap; color: #cfcfcf; font-family: "Noto Sans", sans-serif; }
.search { width: 87px; height: 9px; background: #f4f4f4; border: 1px solid #aaa; padding: 0 2px; }
.search::placeholder { color: #777; }
.acct { display: flex; align-items: center; gap: 4px; padding-left: 2px; width: 68px; }
.exch { width: 18px; }
.exch svg { width: 18px; height: 9px; }
.round { width: 8px; height: 8px; border-radius: 50%; background: #eee; color: #555; font-weight: bold; margin: 0 16px 0 21px; }
.wbtns { display: flex; width: 25px; color: #222; font: bold 6px/8px "DejaVu Sans", sans-serif; }
.wbtns button { width: 8px; }
.menubar { display: flex; align-items: center; justify-content: space-between; height: 12px; }
.menubar nav { display: flex; gap: 11px; padding-left: 9px; }

/* drawing tabs */
.tabs { display: flex; align-items: center; height: 14px; flex: none; background: linear-gradient(#8a8a8a, #9c9c9c); border-bottom: 1px solid #777; font-size: 7px; }
.tab { width: 68px; height: 13px; justify-content: flex-start; padding-left: 15px; color: #555; }
.tab.on { width: 62px; padding: 0 5px 0 8px; justify-content: space-between; color: #222; background: linear-gradient(#c8c8c8, #a5a5a5); clip-path: polygon(4px 0, 58px 0, 100% 100%, 0 100%); }
.plus { width: 12px; height: 7px; margin-left: 4px; border-radius: 2px; background: #858585; border: 1px solid #737373; }

/* docked toolbars */
.bars { flex: none; padding: 1px 0 2px 5px; background: linear-gradient(#777, #636363); }
.row { display: flex; gap: 6px; height: 12px; margin-bottom: 1px; }
.row:last-child { margin: 0; }
.bar { display: flex; align-items: center; height: 11px; background: #e6e8e9; }
.bar button, .float button { width: 11px; height: 11px; }
.bar i, .float i { width: 3px; height: 9px; border-left: 1px solid #aaa; margin-left: 1px; flex: none; margin-right: -1px; }
.bar i.w { width: 5px; }
.bar .wide { width: 17px; }
.wide b { border: 2px solid transparent; border-top-color: #555; margin: 2px 0 0 2px; }
select {
  appearance: none;
  height: 11px;
  padding: 0 8px 0 4px;
  border: 1px solid #c8c8c8;
  background: #f5f5f5 no-repeat;
  background-image: linear-gradient(to bottom right, #222 50%, transparent 50%), linear-gradient(to bottom left, #222 50%, transparent 50%);
  background-size: 2px 3px;
  background-position: right 3px center, right 5px center;
}
.stylesbar button { width: 16px; }
.stylesbar select { width: 56px; padding-left: 6px; font-family: "Noto Sans", sans-serif; }
.space { width: 85px; }
.layer { width: 145px; }
.pick select { width: 100%; }
.layer select { padding-left: 42px; }
.lead em { width: 5px; height: 5px; background: #000; }
.lead u { width: 17px; height: 1px; background: #333; }
.props { background: none; gap: 2px; font-family: "Liberation Serif", serif; }
.colr { width: 75px; }
.ltype { width: 78px; }
.lwt { width: 62px; }
.colr select { padding-left: 9px; }
.ltype select { padding-left: 29px; }
.ltype u { width: 26px; }
.lwt select { padding-left: 20px; }
.plot { width: 58px; color: #999; opacity: 1; }

/* workspace */
.work { position: relative; flex: 1; min-height: 0; display: grid; grid-template-columns: 15px 1fr 16px; align-items: start; background: #686c6b; }
.vbar { display: flex; flex-direction: column; background: #eceeee; width: 11px; margin: 4px 0 0 1px; }
.vbar button { width: 11px; flex: 1; min-height: 0; }
.draw { height: 214px; }
.modify { margin-left: 3px; height: 193px; }
.mtext { font: bold 9px/10px "Liberation Sans", sans-serif; color: #333; }
.doc { display: grid; grid-template: 1fr 10px / 1fr 9px; height: 100%; padding-bottom: 1px; border-left: 1px solid #8b9296; }
.canvas { position: relative; overflow: hidden; background: #202830; }
.model { position: absolute; left: -1px; top: 0; }
.edge { fill: none; stroke: #e4e6e8; stroke-width: 1.2; stroke-linejoin: round; }
.faint { stroke: #a9adb1; stroke-width: 1; }
.cubetext { font: 9px "Noto Sans CJK SC", sans-serif; fill: #55585b; }
.cubetext .c { font-size: 7px; fill: #8f959b; }
.cubetext .s { font-size: 5px; }
.viewlabel { position: absolute; left: 2px; top: 3px; color: #c6cacd; }
.float { position: absolute; display: flex; align-items: center; height: 11px; padding-left: 1px; background: #eceef0; border-left: 3px solid #6b7176; border-right: 3px solid #8b9094; }
.float select { height: 10px; width: 69px; background-color: #fafafa; border-color: #eee; background-image: none; }
.f-ucs { left: 141px; top: 13px; padding-left: 3px; }
.f-view { left: 320px; top: 12px; }
.f-style { left: 83px; top: 33px; }
.f-solid { right: 0; top: 81px; padding-left: 2px; border-right: 0; }
.f-solid i { width: 5px; }
.vscroll { display: flex; flex-direction: column; align-items: center; background: #eef0f2; color: #444; }
.vscroll span { width: 6px; height: 8px; background: #d0d3d5; border: 1px solid #aaa; margin-bottom: auto; }
.layouts { grid-column: 1 / -1; display: flex; align-items: center; background: #eef0f2; color: #222; }
.nav { width: 31px; padding-left: 2px; font: 5px/8px "DejaVu Sans", sans-serif; white-space: nowrap; }
.layouts a { display: flex; gap: 4px; padding-left: 3px; }
.layouts a::after { content: ""; width: 1px; height: 8px; background: #777; transform: skewX(-20deg); }
.layouts .mod { color: #d8dbdd; padding-left: 2px; }
.hscroll { flex: 1; display: flex; align-items: center; justify-content: flex-end; padding-right: 9px; }
.hscroll button { width: 8px; }
.hscroll span { width: 8px; height: 6px; background: #cfd2d4; border: 1px solid #aaa; margin: 0 100px 0 72px; }

/* command line */
.cmd { display: flex; height: 43px; flex: none; border-top: 1px solid #4e4e4e; }
.grip { width: 11px; padding: 6px 0 0 1px; background: linear-gradient(90deg, #8a7a7c, #4c4e50); color: #eee; display: flex; flex-direction: column; align-items: center; gap: 2px; }
.grip .ic { stroke: #eee; }
.cmdbody { flex: 1; display: flex; flex-direction: column; }
.log { flex: 1; padding: 5px 1px 0; background: #c8c8c8; font: 6px/8px "Liberation Mono", "Noto Sans CJK SC", monospace; color: #222; white-space: nowrap; }
.prompt { display: flex; align-items: center; height: 12px; background: #fff; color: #999; padding-left: 2px; gap: 4px; }
.prompt input { flex: 1; font-style: italic; }
.prompt input::placeholder { color: #999; }

/* status row */
.status { display: flex; align-items: center; height: 11px; flex: none; background: #868686; border-top: 1px solid #707070; }
.status output { width: 96px; margin-left: 5px; color: #333; }
.modes { display: flex; flex: 1; font: bold 5px/8px "Liberation Mono", "Noto Sans CJK SC", monospace; }
.status button { height: 9px; min-width: 9px; background: #b2b2b2; padding: 0 1px; }
.modes button { border-right: 1px solid #868686; }
.status .zh { font: 6px/8px "Noto Sans CJK SC", sans-serif; }
.status .on { background: #b8dde4; color: #174a5c; }
.modelbtn { margin-right: 146px; }

/* taskbar */
.task { display: flex; align-items: center; height: 14px; flex: none; background: linear-gradient(#b4c2d4, #8ea6c6 40%, #839dc0); border-top: 1px solid #dbe2ea; }
.orb { width: 30px; }
.orb svg { width: 16px; height: 13px; }
.apps { display: flex; justify-content: space-between; flex: none; width: 356px; margin-right: auto; }
.apps button { width: 20px; height: 13px; }
.apps svg { width: 9px; height: 9px; }
.run { background: linear-gradient(#d9e4f2, #adc1dc); border: 1px solid #d6e2f0; }
.hot { background: radial-gradient(#fff0a8, #eaa434); }
.tray { display: flex; align-items: center; gap: 4px; color: #fff; margin-right: 5px; }
.ime { font-size: 7px; }
.sw { width: 7px; height: 7px; border-radius: 1px; background: #4a4038; }
.sw.b { background: #d2bc48; border: 2px solid #433e2c; }
.sw.c { background: #e0edfa; border: 2px solid #236cc0; margin-left: 12px; }
.sw.d { background: #e9b83c; border: 2px solid #cc6f5c; }
.sw.e { background: #d9dcdf; border: 1px solid #555; }
.ball { width: 8px; height: 8px; border-radius: 50% 50% 50% 0; border: 2px solid #e8f7fd; background: #46a8d8; }
.tray time { margin-left: 6px; font-size: 7px; }
.desk { width: 7px; height: 13px; background: #667a94; border-left: 1px solid #b8c6d8; }

/* screen sharing strip */
.share { position: absolute; right: 4px; bottom: 18px; width: 143px; height: 14px; display: flex; align-items: center; background: linear-gradient(#e9f5fc, #c8e3f2); border: 1px solid #a8cadc; color: #355063; }
.share p { display: flex; align-items: center; gap: 4px; flex: 1; height: 100%; padding-left: 8px; background: #f4fafd; }
.rec { width: 4px; height: 4px; border-radius: 50%; background: #d22030; }
.share button { width: 30px; height: 8px; border-left: 1px solid #b4d2e0; }
.share button:last-child { width: 38px; }
.frame { position: absolute; inset: 0; pointer-events: none; border: 1px solid rgba(205, 55, 75, .6); }
.frame::before { content: ""; position: absolute; left: 297px; top: -1px; width: 30px; height: 3px; background: #df3540; }
.frame::after { content: ""; position: absolute; right: -1px; top: 1px; width: 12px; height: 11px; border: solid #dc2030; border-width: 2px 2px 0 0; }
```
